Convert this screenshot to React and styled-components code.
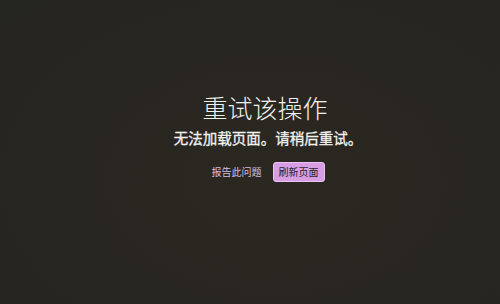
import React from 'react';
import styled, { createGlobalStyle } from 'styled-components';

const GlobalStyle = createGlobalStyle`
    html, body, #root {
        margin: 0;
        padding: 0;
        width: 100%;
        height: 100%;
    }
    body {
        background: #272622;
        font-family: "Noto Sans CJK SC", "Noto Sans", sans-serif;
    }
`;

const Page = styled.div`
    width: 500px;
    height: 304px;
    box-sizing: border-box;
    padding: 92px 0 0 30px;
    background: radial-gradient(ellipse at 55% 60%, #2b2822 0%, #282620 55%, #252521 100%);
    display: flex;
    flex-direction: column;
    align-items: center;
`;

const Title = styled.h1`
    margin: 0;
    font-size: 25px;
    line-height: 31px;
    font-weight: 300;
    color: #f2f0ec;
`;

const Message = styled.p`
    margin: 5px 0 0;
    padding-left: 6px;
    font-size: 14.5px;
    line-height: 20px;
    font-weight: 400;
    color: #f4f2ee;
    -webkit-text-stroke: 0.3px #f4f2ee;
`;

const Actions = styled.div`
    margin-top: 14px;
    display: flex;
    align-items: center;
    gap: 11px;
    transform: translateX(3px);
`;

const LinkButton = styled.button`
    border: none;
    background: none;
    padding: 0;
    font-family: inherit;
    font-size: 10px;
    line-height: 20px;
    color: #d9bde0;
    cursor: pointer;
`;

const PrimaryButton = styled.button`
    border: 1px solid #ecc2f4;
    background: #d79ee4;
    border-radius: 3px;
    padding: 0 5px;
    height: 20px;
    font-family: inherit;
    font-size: 10px;
    line-height: 18px;
    color: #2a2228;
    cursor: pointer;
`;

function App() {
    return (
        <>
            <GlobalStyle />
            <Page>
                <Title>重试该操作</Title>
                <Message>无法加载页面。请稍后重试。</Message>
                <Actions>
                    <LinkButton>报告此问题</LinkButton>
                    <PrimaryButton>刷新页面</PrimaryButton>
                </Actions>
            </Page>
        </>
    );
}

export default App;
